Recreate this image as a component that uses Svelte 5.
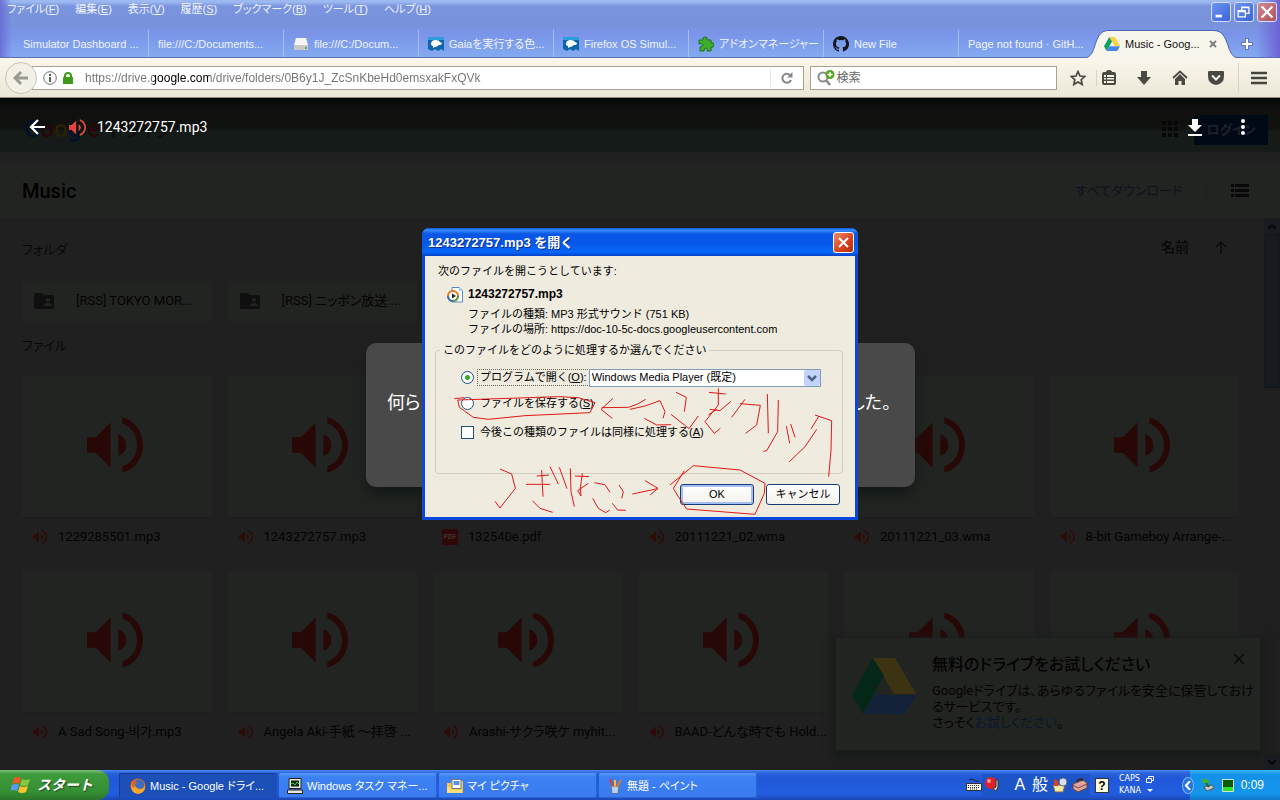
<script>
  const menus = [
    ['ファイル', 'F'], ['編集', 'E'], ['表示', 'V'], ['履歴', 'S'],
    ['ブックマーク', 'B'], ['ツール', 'T'], ['ヘルプ', 'H']
  ];
  const tabs = [
    { title: 'Simulator Dashboard ...' },
    { title: 'file:///C:/Documents...' },
    { title: 'file:///C:/Docum...', icon: 'disk' },
    { title: 'Gaiaを実行する色...', icon: 'moz' },
    { title: 'Firefox OS Simul...', icon: 'moz' },
    { title: 'アドオンマネージャー', icon: 'addon' },
    { title: 'New File', icon: 'github' },
    { title: 'Page not found · GitH...' }
  ];
  const folders = ['[RSS] TOKYO MOR...', '[RSS] ニッポン放送 ...'];
  const files = [
    '1229285501.mp3', '1243272757.mp3', '132540e.pdf', '20111221_02.wma', '20111221_03.wma', '8-bit Gameboy Arrange-...',
    'A Sad Song-비가.mp3', 'Angela Aki-手紙 ～拝啓 ...', 'Arashi-サクラ咲ケ myhit...', 'BAAD-どんな時でも Hold...', '', ''
  ];
  const tasks = [
    { title: 'Music - Google ドライ...', icon: 'firefox', active: true },
    { title: 'Windows タスク マネー...', icon: 'monitor' },
    { title: 'マイ ピクチャ', icon: 'pictures' },
    { title: '無題 - ペイント', icon: 'paint' }
  ];
  let url = $state('https://drive.google.com/drive/folders/0B6y1J_ZcSnKbeHd0emsxakFxQVk');
  let action = $state('open');
</script>

{#snippet speaker(size)}
  <svg width={size} height={size} viewBox="0 0 57 56" fill="currentColor" aria-hidden="true">
    <path d="M0 20H9L24 5V51L9 36H0zM32 17Q40 20 40 28T32 39zM36 0C49 3 57 15 57 28S49 53 36 56V50C45 47 51 38 51 28S45 9 36 6z" />
  </svg>
{/snippet}

{#snippet driveLogo(w, h)}
  <svg width={w} height={h} viewBox="0 0 64 56" aria-hidden="true">
    <path fill="#ffcf48" d="M21 0H43L64 36H42z" />
    <path fill="#0fa15f" d="M21 0L32 18L11 56L0 37z" />
    <path fill="#4a86e8" d="M22 37H64L53 56H11z" />
  </svg>
{/snippet}

<div class="shell">
  <header class="frame">
    <div class="menurow">
      <nav class="menus">
        {#each menus as [name, key]}
          <button>{name}(<u>{key}</u>)</button>
        {/each}
      </nav>
      <div class="winbtns">
        <button aria-label="最小化"><svg viewBox="0 0 20 20"><path fill="#fff" d="M4 13h7v3H4z" /></svg></button>
        <button aria-label="元に戻す"><svg viewBox="0 0 20 20" fill="none" stroke="#fff" stroke-width="1.400"><path d="M7.500 8V4.500h8v7H12M7 5h9" /><path d="M3.500 8.500h8v7h-8zM3 9.500h9" /></svg></button>
        <button class="x" aria-label="閉じる"><svg viewBox="0 0 20 20" stroke="#fff" stroke-width="2.400"><path d="M4 4l12 12M16 4L4 16" /></svg></button>
      </div>
    </div>
    <div class="tabs">
      {#each tabs as tab}
        <button class="tab">
          {#if tab.icon === 'disk'}
            <svg width="16" height="16" viewBox="0 0 16 16"><path fill="#f6f5f0" d="M3 2h10l2 7v5H1V9z" /><path fill="#c9c8c4" d="M1 9h14v4q0 1-1 1H2q-1 0-1-1z" /><path fill="#5a8" d="M12 11h2v2h-2z" /></svg>
          {:else if tab.icon === 'moz'}
            <svg width="16" height="16" viewBox="0 0 16 16"><path fill="#0b66ac" d="M0 1h16v14l-3-2-3 2-3-2-3 2-4-2z" /><path fill="#2da0dc" d="M0 1h16v3H0z" /><path fill="#fff" d="M3 8q0-4 5-4 3 0 4 2l2 1q0 2-3 2-2 2-4 2l-2 1v-2q-2 0-2-2z" /></svg>
          {:else if tab.icon === 'addon'}
            <svg width="16" height="16" viewBox="0 0 16 16"><path fill="#3fae2c" stroke="#1d7416" d="M5 4Q4 1 7 1t2 3h4v3q3-1 3 2t-3 2v4H9q1-3-1-3t-2 3H2v-4q3 0 3-2T1 8V4z" /></svg>
          {:else if tab.icon === 'github'}
            <svg width="16" height="16" viewBox="0 0 16 16"><path fill="#15181c" d="M8 0C3.580 0 0 3.580 0 8c0 3.540 2.290 6.530 5.470 7.590.4.070.55-.17.55-.38v-1.490c-2.230.48-2.700-.94-2.700-.94-.36-.92-.89-1.170-.89-1.170-.73-.5.050-.49.050-.49.81.060 1.230.83 1.230.83.71 1.230 1.870.87 2.330.67.070-.52.280-.87.500-1.070-1.780-.2-3.640-.89-3.640-3.950 0-.87.310-1.590.82-2.150-.08-.2-.36-1.020.08-2.120 0 0 .67-.21 2.200.82a7.600 7.600 0 0 1 4 0c1.530-1.040 2.200-.82 2.200-.82.44 1.100.16 1.920.08 2.120.51.560.82 1.270.82 2.150 0 3.070-1.870 3.750-3.650 3.950.29.250.54.730.54 1.480v2.180c0 .21.150.46.550.38A8 8 0 0 0 8 0" /></svg>
          {/if}
          <span>{tab.title}</span>
        </button>
      {/each}
      <div class="tab active">
        <svg class="shape" viewBox="0 0 155 28" preserveAspectRatio="none"><path fill="#f8f5ec" stroke="#4b62ae" d="M0 28C14 28 8 1 24 .5H130C147 1 141 28 155 28" /></svg>
        {@render driveLogo(16, 14)}
        <span>Music - Goog...</span>
        <button class="tabx" aria-label="タブを閉じる"><svg width="8" height="8" viewBox="0 0 8 8" stroke="#7d7d7d" stroke-width="2"><path d="M1 1l6 6M7 1L1 7" /></svg></button>
      </div>
      <button class="newtab" aria-label="新しいタブ"><svg width="12" height="12" viewBox="0 0 12 12"><path fill="#fff" stroke="#4a5ca0" stroke-width=".8" d="M4.500 .5h3v4h4v3h-4v4h-3v-4h-4v-3h4z" /></svg></button>
    </div>
  </header>

  <div class="toolbar">
    <button class="back" aria-label="戻る"><svg width="16" height="16" viewBox="0 0 16 16" fill="none" stroke="#9c998f" stroke-width="3"><path d="M15 8H3M8 2L2 8l6 6" /></svg></button>
    <div class="urlbar">
      <svg width="14" height="14" viewBox="0 0 14 14"><circle cx="7" cy="7" r="6.300" fill="none" stroke="#6b6b6b" /><path fill="#5c5c5c" d="M6 6h2v5H6zM6 3h2v2H6z" /></svg>
      <svg width="10" height="12" viewBox="0 0 10 12"><path fill="none" stroke="#3f9a1c" stroke-width="2" d="M2 6V4q0-3 3-3t3 3v2" /><path fill="#3f9a1c" d="M0 5h10v7H0z" /></svg>
      <input class="url" aria-label="アドレス" bind:value={url} />
      <button class="reload" aria-label="再読み込み"><svg width="12" height="12" viewBox="0 0 12 12"><path fill="none" stroke="#84888e" stroke-width="2" d="M9.500 3.500A4.500 4.500 0 1 0 10 8" /><path fill="#84888e" d="M11.500 0v5.500H6z" /></svg></button>
    </div>
    <div class="search">
      <svg width="18" height="16" viewBox="0 0 18 16"><circle cx="6" cy="7" r="4.500" fill="none" stroke="#8c8c8c" stroke-width="2" /><path stroke="#8c8c8c" stroke-width="2.500" d="M9 10l4 5" /><circle cx="13" cy="4.500" r="4.500" fill="#57a51d" /><path stroke="#fff" stroke-width="1.300" d="M10.500 4.500h5M13 2v5" /></svg>
      <input aria-label="検索" placeholder="検索" />
    </div>
    <div class="tools">
      <button aria-label="ブックマーク"><svg width="16" height="16" viewBox="0 0 16 16" fill="none" stroke="#4b4a42" stroke-width="1.700"><path d="M8 1.500l2 4.500 4.800.5-3.600 3.200 1 4.800L8 12l-4.200 2.500 1-4.800L1.200 6.500 6 6z" /></svg></button>
      <button class="sep" aria-label="一覧"><svg width="16" height="16" viewBox="0 0 16 16"><path fill="#4b4a42" d="M5 2q0-2 3-2t3 2h2q2 0 2 2v9q0 2-2 2H3q-2 0-2-2V4q0-2 2-2z" /><path fill="#f3f0e5" d="M3 5h2v2H3zM6 5h7v2H6zM3 8h2v1.500H3zM6 8h7v1.500H6zM3 11h2v2H3zM6 11h7v2H6z" /></svg></button>
      <button aria-label="ダウンロード"><svg width="16" height="16" viewBox="0 0 16 16"><path fill="#4b4a42" d="M5 1h6v6h4l-7 8-7-8h4z" /></svg></button>
      <button aria-label="ホーム"><svg width="16" height="16" viewBox="0 0 16 16"><path fill="none" stroke="#4b4a42" stroke-width="1.800" d="M1 8l7-6.500L15 8" /><path fill="#4b4a42" d="M3 9l5-5 5 5v6H9.500v-4h-3v4H3z" /></svg></button>
      <button aria-label="Pocket"><svg width="16" height="16" viewBox="0 0 16 16"><path fill="#4b4a42" d="M1 1h14q1 0 1 1v4q0 8-8 9Q0 14 0 6V2q0-1 1-1z" /><path fill="none" stroke="#f3f0e5" stroke-width="2" d="M4 5.500l4 4 4-4" /></svg></button>
      <button class="sep burger" aria-label="メニュー"><svg width="16" height="14" viewBox="0 0 16 14"><path stroke="#45443d" stroke-width="2.600" d="M0 2h16M0 7h16M0 12h16" /></svg></button>
    </div>
  </div>

  <main class="page">
    <div class="gbar">
      <div class="glogo"><b class="g1">G</b><b class="g2">o</b><b class="g3">o</b><b class="g1">g</b><b class="g4">l</b><b class="g2">e</b><span>ドライブ</span></div>
      <svg width="17" height="17" viewBox="0 0 17 17" fill="#060706"><path d="M0 0h4v4H0zM6 0h4v4H6zM12 0h4v4h-4zM0 6h4v4H0zM6 6h4v4H6zM12 6h4v4h-4zM0 12h4v4H0zM6 12h4v4H6zM12 12h4v4h-4z" /></svg>
      <button class="login">ログイン</button>
    </div>
    <div class="titlebar">
      <h1>Music</h1>
      <button class="dlall">すべてダウンロード</button>
      <svg width="18" height="14" viewBox="0 0 18 14"><path fill="#080908" d="M0 0h3v3H0zM4 0h14v3H4zM0 5h3v3H0zM4 5h14v3H4zM0 10h3v3H0zM4 10h14v3H4z" /></svg>
    </div>
    <div class="body">
      <div class="list">
        <div class="sechead"><span>フォルダ</span><span class="sort">名前</span><svg width="12" height="14" viewBox="0 0 12 14" fill="none" stroke="#0b0b0b" stroke-width="1.500"><path d="M6 14V2M1 7l5-5 5 5" /></svg></div>
        <div class="grid">
          {#each folders as f}
            <div class="folder"><svg width="20" height="16" viewBox="0 0 20 16"><path fill="#0e0f0e" d="M2 0h6l2 2h8q2 0 2 2v10q0 2-2 2H2q-2 0-2-2V2q0-2 2-2z" /><circle cx="14" cy="7" r="2" fill="#222421" /><path fill="#222421" d="M10 13q0-3 4-3t4 3z" /></svg><span>{f}</span></div>
          {/each}
        </div>
        <div class="sechead files">ファイル</div>
        <div class="grid">
          {#each files as f}
            <div class="file">
              <div class="thumb">{@render speaker(56)}</div>
              <div class="name">
                {#if f.endsWith('.pdf')}
                  <span class="pdf">PDF</span>
                {:else}
                  {@render speaker(14)}
                {/if}
                <span>{f}</span>
              </div>
            </div>
          {/each}
        </div>
      </div>
      <div class="scroll"><i class="up"><svg width="8" height="5" viewBox="0 0 8 5" fill="none" stroke="#05080c" stroke-width="2"><path d="M0 5l4-4 4 4" /></svg></i><i class="bar"></i><i class="down"><svg width="8" height="5" viewBox="0 0 8 5" fill="none" stroke="#05080c" stroke-width="2"><path d="M0 0l4 4 4-4" /></svg></i></div>
    </div>

    <aside class="promo">
      <div class="plogo">{@render driveLogo(64, 56)}</div>
      <div>
        <h2>無料のドライブをお試しください</h2>
        <p>Googleドライブは、あらゆるファイルを安全に保管しておけるサービスです。<br />さっそく<a href="#try">お試しください</a>。</p>
      </div>
      <button aria-label="閉じる"><svg width="10" height="10" viewBox="0 0 10 10" stroke="#090a09" stroke-width="1.500"><path d="M0 0l10 10M10 0L0 10" /></svg></button>
    </aside>

    <div class="viewer">
      <button aria-label="戻る"><svg width="16" height="16" viewBox="0 0 16 16" fill="none" stroke="#fff" stroke-width="2.200"><path d="M16 8H2M9 1L2 8l7 7" /></svg></button>
      <span class="vicon">{@render speaker(17)}</span>
      <span class="vname">1243272757.mp3</span>
      <button aria-label="ダウンロード"><svg width="14" height="17" viewBox="0 0 14 17" fill="#fff"><path d="M4 0h6v6h4l-7 7-7-7h4zM0 15h14v2H0z" /></svg></button>
      <button class="more" aria-label="その他"><svg width="4" height="16" viewBox="0 0 4 16" fill="#fff"><circle cx="2" cy="2" r="2" /><circle cx="2" cy="8" r="2" /><circle cx="2" cy="14" r="2" /></svg></button>
    </div>

    <div class="message"><span>何ら</span><span>した。</span></div>

    <section class="dialog">
      <div class="dtitle"><strong>1243272757.mp3 を開く</strong><button aria-label="閉じる"><svg width="19" height="19" viewBox="0 0 19 19" stroke="#fff" stroke-width="2"><path d="M5 5l9 9M14 5l-9 9" /></svg></button></div>
      <div class="dbody">
        <p>次のファイルを開こうとしています:</p>
        <div class="dfile">
          <svg width="16" height="16" viewBox="0 0 16 16"><path fill="#fff" stroke="#5a86c4" d="M5 .5h7l3.500 3V15H5z" /><path fill="#a9c9ef" d="M12 0v4h4z" /><circle cx="6" cy="9" r="5" fill="#fff" stroke="#e27a1e" stroke-width="2" /><path fill="none" stroke="#3472c9" stroke-width="2" d="M1 9a5 5 0 0 0 5 5" /><path fill="none" stroke="#4ba43a" stroke-width="2" d="M6 14a5 5 0 0 0 5-5" /><path fill="#222" d="M5 6.500L9 9l-4 2.500z" /></svg>
          <div>
            <strong>1243272757.mp3</strong>
            <div class="meta">ファイルの種類: MP3 形式サウンド (751 KB)</div>
            <div class="meta">ファイルの場所: https://doc-10-5c-docs.googleusercontent.com</div>
          </div>
        </div>
        <fieldset>
          <legend>このファイルをどのように処理するか選んでください</legend>
          <div class="opt">
            <input type="radio" id="open" value="open" bind:group={action} />
            <label class="focus" for="open">プログラムで開く(<u>O</u>):</label>
            <select aria-label="プログラム"><option>Windows Media Player (既定)</option></select>
          </div>
          <div class="opt">
            <input type="radio" id="save" value="save" bind:group={action} />
            <label for="save">ファイルを保存する(<u>S</u>)</label>
          </div>
          <div class="opt last">
            <input type="checkbox" id="always" />
            <label for="always">今後この種類のファイルは同様に処理する(<u>A</u>)</label>
          </div>
        </fieldset>
        <div class="dbtns"><button class="ok">OK</button><button>キャンセル</button></div>
      </div>
      <svg class="ink" viewBox="21 -396 1308 876" fill="none" stroke="#e01818" stroke-width="3">
        <path d="M118 116L148 113M128 120L160 119 430 110 490 113 540 128 525 158 330 167 220 178 175 172 133 142 128 120" />
        <path d="M594 115L558 148 592 175M560 143L640 142 668 132 692 118M645 148L690 138 735 122 750 155 744 175M688 175L725 195 768 194" />
        <path d="M783 97L814 112 808 155M768 163L822 206 850 168M882 97L932 102M910 85V135L870 185 898 220 916 205M884 148L915 152 948 124M905 148L880 165" />
        <path d="M990 118L950 172M975 131L1036 136 1025 195 992 220M1057 102L1060 220M1090 120L1088 215 1055 272 1045 274" />
        <path d="M1114 198L1124 250M1127 192L1140 232M1205 208L1170 260 1122 306M1212 168L1188 207M1200 165L1250 182 1248 270 1241 350" />
        <path d="M255 327L290 342 301 385 255 444 240 424M365 348L402 345M333 373L405 373M380 330L384 410M352 422L375 445 413 457M405 320L430 372M433 322L456 386" />
        <path d="M466 325L468 395 478 440M480 348L522 350M502 340L496 385 498 408 488 392 520 370M538 368L570 374 585 397M533 415L550 445 572 458 584 450M612 375L625 395 620 415M592 430L608 450 632 451" />
        <path d="M652 402L728 386M690 362L729 385 705 405M765 375L835 317 975 330 1050 370 1048 400 1020 463 815 447 790 410 775 385 808 332" />
      </svg>
    </section>
  </main>

  <footer class="taskbar">
    <button class="start">
      <svg width="20" height="18" viewBox="0 0 20 18"><path fill="#f0592b" d="M3 2q3-2 7 0L8 8Q5 6 1 8z" /><path fill="#8ac53f" d="M11 3q3 2 8 0l-2 6q-4 2-8 0z" /><path fill="#5a9cf5" d="M1 9q4-2 7 0l-2 6q-3-2-7 0z" /><path fill="#fbc42d" d="M9 10q3 2 8 0l-2 6q-4 2-8 0z" /></svg>
      <span>スタート</span>
    </button>
    <div class="tasks">
      {#each tasks as t}
        <button class="task" class:on={t.active}>
          {#if t.icon === 'firefox'}
            <svg width="16" height="16" viewBox="0 0 16 16"><circle cx="8" cy="8" r="7.500" fill="#e8641b" /><circle cx="9" cy="6.500" r="5" fill="#3c6fc0" /><path fill="#f9a72b" d="M1 4q3 0 4 3 1 4 5 4 4 0 5-4 1 8-7 9Q0 15 1 4z" /><path fill="#e8641b" d="M1 3l2 1q3-1 4 1-3 1-2 4-4 2-4-6z" /></svg>
          {:else if t.icon === 'monitor'}
            <svg width="16" height="16" viewBox="0 0 16 16"><path fill="#e8e6d8" stroke="#222" d="M2 .5h12v10H2zM.5 12h15v3.500H.5z" /><path fill="#062406" d="M4 2.500h8v6H4z" /><path fill="none" stroke="#3fe03f" d="M4 6l2-1 2 2 2-3 2 2" /></svg>
          {:else if t.icon === 'pictures'}
            <svg width="16" height="16" viewBox="0 0 16 16"><path fill="#f1c94b" d="M0 5h4V3h12v12H0z" /><path fill="#fff" stroke="#777" d="M5 1.500h9v9H5z" /><path fill="#5a93d8" d="M6.500 3h6v4h-6z" /><path fill="#f9df7a" d="M0 9h3l1 3h11l-1 3H0z" /></svg>
          {:else}
            <svg width="16" height="16" viewBox="0 0 16 16"><path fill="#bccfe6" stroke="#5b7398" d="M4 8h8l-1 7.500H5z" /><path stroke="#e03a2a" stroke-width="2" d="M6 8L3 1" /><path stroke="#f2c22e" stroke-width="2" d="M8 8V2" /><path stroke="#e2762a" stroke-width="2" d="M10 9l4-7" /></svg>
          {/if}
          <span>{t.title}</span>
        </button>
      {/each}
    </div>
    <div class="lang">
      <svg width="16" height="16" viewBox="0 0 16 16"><path fill="none" stroke="#222" d="M3 3q3-2 5 0t5 1" /><path fill="#f4f2e4" stroke="#333" d="M.5 6.500h15v7H.5z" /><path stroke="#333" stroke-dasharray="1 1" d="M2 8.500h12M2 10.500h12M4 12h8" /></svg>
      <i class="cell"><svg width="16" height="16" viewBox="0 0 16 16"><circle cx="7" cy="6" r="6" fill="#e2202a" /><circle cx="5" cy="4" r="2" fill="#ff9c9c" /><path fill="#ddd" stroke="#333" d="M12 3h2v7l-2 4-3-2 3-2z" /></svg></i>
      <span class="cell mode">A</span><span class="cell">般</span>
      <i class="cell"><svg width="16" height="16" viewBox="0 0 16 16"><path fill="#f4e9a4" stroke="#765" d="M1 8h12l-2 7H3z" /><path fill="#d8402c" d="M2 2l4 2v5H2z" /><circle cx="11" cy="5" r="4" fill="#d8e4ec" stroke="#667" /></svg></i>
      <i class="cell"><svg width="16" height="16" viewBox="0 0 16 16"><path fill="#d9a79f" stroke="#643" d="M1 7l10-4 4 3v5l-9 4-5-3z" /><path fill="none" stroke="#322" stroke-width="1.500" d="M5 5q0-3 5-3v2" /><path fill="none" stroke="#844" d="M1 8l5 3 9-4" /></svg></i>
      <i class="cell help">?</i>
      <span class="caps">CAPS<br />KANA</span>
      <svg width="8" height="18" viewBox="0 0 8 18"><path fill="none" stroke="#fff" d="M2.500 3V.5h5v4H6M.5 2.500h5v4h-5z" /><path fill="#fff" d="M1 13h6l-3 3z" /></svg>
    </div>
    <div class="tray">
      <button class="chev" aria-label="隠れているアイコンを表示"><svg width="6" height="9" viewBox="0 0 6 9" fill="none" stroke="#fff" stroke-width="2"><path d="M5 0L1 4.500 5 9" /></svg></button>
      <svg width="14" height="14" viewBox="0 0 14 14"><path fill="#3fae3a" d="M1 1h5l3 3-4 2-4-2z" /><path fill="#ccc" stroke="#555" d="M3 9l8-2 2 3-7 3z" /><path stroke="#1e6e1b" stroke-width="2" d="M5 5l3 4" /></svg>
      <svg width="12" height="13" viewBox="0 0 12 13"><path fill="#0a5c0a" stroke="#cfe8cf" d="M.5 .5h11v12H.5z" /><path fill="#2fe02f" d="M1 8h10v4H1z" /></svg>
      <time>0:09</time>
    </div>
  </footer>
</div>

<style>
  :global(body) { margin: 0; }
  .shell { height: 100vh; display: flex; flex-direction: column; overflow: hidden; font: 11px/16px "Liberation Sans", "Noto Sans CJK JP", sans-serif; font-feature-settings: "palt"; white-space: nowrap; }
  .shell *, .shell { box-sizing: border-box; }
  button { font: inherit; font-feature-settings: inherit; color: inherit; border: 0; background: none; padding: 0; margin: 0; }
  input, select { font: inherit; font-feature-settings: inherit; margin: 0; }
  svg { display: block; flex: none; }
  p, h1, h2 { margin: 0; font-weight: normal; }
  i { font-style: normal; }

  .frame { flex: none; height: 58px; display: flex; flex-direction: column; justify-content: space-between; color: #eef3ff; border-bottom: 1px solid #5a6eb8; background: linear-gradient(90deg, #6c70d8 0, #7b9cec00 12px, #7b9cec00 calc(100% - 24px), #6d62d4), linear-gradient(#9db9f2 0, #9db9f2 2px, #7a94dd 6px, #7893dc 26px, #7b96ea 36px, #83a9ef 56px); }
  .menurow { display: flex; justify-content: space-between; align-items: flex-start; padding: 1px 3px 0 7px; }
  .menus { display: flex; gap: 16px; }
  .winbtns { display: flex; gap: 3px; padding-top: 1px; }
  .winbtns button { width: 20px; height: 20px; border: 1px solid #d2defb; border-radius: 3px; background: linear-gradient(135deg, #6f95f1, #3a63d8); }
  .winbtns svg { width: 18px; height: 18px; }
  .winbtns .x { background: linear-gradient(135deg, #cf8a90, #ae5260); }
  .tabs { display: flex; height: 27px; padding-left: 14px; }
  .tab { flex: 0 1 135px; min-width: 0; display: flex; align-items: center; gap: 5px; padding: 0 9px; position: relative; overflow: hidden; border-right: 1px solid #a5bcf3; }
  .tab:nth-child(8) { border: 0; }
  .active { overflow: visible; border: 0; color: #111; padding: 0 10px; }
  .active > * { position: relative; }
  .active .shape { position: absolute; left: -10px; top: 0; width: calc(100% + 20px); height: 28px; }
  .tabx { margin-left: auto; padding: 4px; }
  .newtab { padding: 0 12px; }

  .toolbar { flex: none; height: 40px; display: flex; align-items: center; padding: 0 2px 0 5px; background: linear-gradient(#faf6ec, #ebe7d7); border-bottom: 1px solid #8f8c78; }
  .back { width: 32px; height: 32px; border-radius: 50%; border: 1px solid #c9c5b8; background: #f3f0e6; display: grid; place-items: center; z-index: 1; }
  .urlbar { flex: 778 1 0; min-width: 0; height: 24px; margin-left: -5px; background: #fff; border: 1px solid #a8a390; display: flex; align-items: center; gap: 6px; padding-left: 10px; }
  .url { flex: 1; min-width: 0; border: 0; outline: 0; margin-left: 6px; padding: 0; height: 18px; font-size: 12px; color: transparent; background: linear-gradient(90deg, #737373 68px, #000 68px, #000 125px, #737373 125px); -webkit-background-clip: text; background-clip: text; }
  .reload { width: 33px; height: 18px; display: grid; place-items: center; border-left: 1px solid #e5e5e5; }
  .search { flex: 244 1 0; min-width: 0; height: 24px; margin-left: 6px; background: #fff; border: 1px solid #a8a390; display: flex; align-items: center; padding-left: 6px; gap: 1px; }
  .search input { flex: 1; min-width: 0; border: 0; padding: 0; outline: 0; font-size: 12px; }
  .search input::placeholder { color: #666; }
  .tools { display: flex; align-items: center; padding-left: 3px; }
  .tools button { width: 36px; height: 30px; display: grid; place-items: center; }
  .tools .sep { border-left: 1px solid #d8d4c6; }
  .tools button:nth-child(2) { height: 16px; width: 30px; padding-right: 6px; }
  .tools .burger { width: 40px; margin-left: 4px; }

  .page { flex: 1; min-height: 0; position: relative; overflow: hidden; display: flex; flex-direction: column; background: #202020; color: #020302; font-family: Roboto, "Noto Sans CJK JP", "Noto Sans CJK KR", sans-serif; font-size: 13px; border-top: 1px solid #000; }
  .gbar { flex: none; height: 53px; display: flex; align-items: center; padding: 8px 12px 0 24px; background: linear-gradient(#060a07 0, #110f0f 10px, #101310 30px, #151b19 32px, #161b1a); }
  .glogo { display: flex; align-items: baseline; flex: 1; font-size: 24px; line-height: 28px; }
  .glogo b { font-weight: 500; }
  .g1 { color: #04102a; } .g2 { color: #260706; } .g3 { color: #2a2004; } .g4 { color: #04200d; }
  .glogo span { font-size: 18px; padding-left: 9px; color: #0a0d0c; }
  .login { width: 74px; height: 30px; margin-left: 15px; background: #000a16; color: #1b222b; font-weight: bold; }
  .titlebar { flex: none; height: 66px; padding: 0 31px 0 22px; display: flex; align-items: center; background: #222421; border-top: 11px solid #202020; }
  .titlebar h1 { flex: 1; font: 500 20px/24px Roboto, sans-serif; color: #000; }
  .dlall { color: #0a1220; height: 22px; padding-right: 24px; border-right: 1px solid #1e1f1d; margin-right: 24px; }
  .body { flex: 1; min-height: 0; display: flex; }
  .list { flex: 1; min-width: 0; padding: 0 25px 0 22px; }
  .sechead { display: flex; align-items: center; height: 63px; color: #080808; }
  .sechead svg { margin: 0 12px 6px 26px; }
  .sort { margin-left: auto; font-size: 14px; font-weight: 500; padding-bottom: 6px; }
  .files { height: 55px; padding-bottom: 6px; }
  .grid { display: grid; grid-template-columns: repeat(6, minmax(0, 1fr)); gap: 16px; }
  .folder { height: 40px; background: #222421; display: flex; align-items: center; gap: 22px; padding-left: 12px; overflow: hidden; }
  .thumb { height: 142px; display: grid; place-items: center; padding: 0 4px 4px 0; background: #222421; border-bottom: 1px solid #1c1d1c; color: #280707; }
  .name { height: 37px; display: flex; align-items: center; gap: 11px; padding-left: 11px; overflow: hidden; }
  .name svg { color: #2e0a09; }
  .pdf { width: 16px; height: 16px; flex: none; margin-left: -2px; margin-right: -1px; background: #2c0808; color: #453332; font: bold 7px/16px Roboto, sans-serif; text-align: center; }
  .scroll { width: 16px; display: flex; flex-direction: column; background: #1e1f1e; }
  .scroll i { display: grid; place-items: center; height: 16px; background: #181c20; }
  .scroll .bar { height: 154px; background: #171b1f; border: 1px solid #13171a; }
  .scroll .down { margin-top: auto; }

  .promo { position: absolute; right: 20px; bottom: 20px; width: 424px; height: 112px; padding: 17px 5px 0 16px; display: flex; gap: 16px; background: #222421; box-shadow: 0 4px 8px 4px #181c19; }
  .promo > div { flex: 1; white-space: normal; min-width: 0; }
  .promo .plogo { flex: none; width: 64px; filter: brightness(.24); padding-top: 3px; }
  .promo h2 { font-size: 16px; line-height: 20px; font-weight: 500; padding-bottom: 8px; white-space: nowrap; }
  .promo a { color: #07182c; text-decoration: none; }
  .promo button { position: absolute; right: 16px; top: 16px; }

  .viewer { position: absolute; left: 0; right: 0; top: 0; height: 56px; padding: 0 35px 0 29px; display: flex; align-items: center; color: #fff; }
  .vicon { color: #e2453a; margin-left: 24px; }
  .vname { flex: 1; font-size: 14px; padding-left: 11px; }
  .more { margin-left: 39px; }

  .message { position: absolute; left: calc(50% - 274px); top: 244px; width: 549px; height: 144px; padding: 0 24px 24px 21px; display: flex; align-items: center; justify-content: space-between; color: #fff; font-size: 18px; background: #494949; border-radius: 10px; box-shadow: 0 8px 12px #141a18; }

  .dialog { position: absolute; left: calc(50% - 218px); top: 129px; width: 436px; border: 3px solid #0a47dc; border-top: 0; border-radius: 7px 7px 0 0; background: #0a47dc; color: #000; font: 11px/15px "Liberation Sans", "Noto Sans CJK JP", sans-serif; }
  .dtitle { height: 28px; margin: 0 -3px; padding: 0 4px 0 6px; border-radius: 7px 7px 0 0; display: flex; align-items: center; justify-content: space-between; color: #fff; font-size: 13px; text-shadow: 1px 1px #0b2f8c; background: linear-gradient(#0b50d8, #3a8cf8 2px, #0a56e6 6px, #0458e8 16px, #0667fb 24px, #0340c8); }
  .dtitle button { border: 1px solid #fff; border-radius: 3px; background: linear-gradient(135deg, #ee8b6a, #d6401c 60%, #b92c0c); }
  .dbody { background: #efebde; padding: 8px 12px 12px 10px; }
  .dbody p { padding-left: 3px; }
  .dfile { display: flex; gap: 5px; padding: 8px 0 0 12px; }
  .dfile strong { display: block; padding-bottom: 5px; font-size: 12px; }
  fieldset { margin: 6px 0 0; border: 1px solid #d0cebf; border-radius: 4px; padding: 10px 21px 0 25px; height: 131px; min-width: 0; }
  legend { padding: 0 3px; margin-left: -21px; }
  .opt { display: flex; align-items: center; height: 19px; margin-bottom: 7px; }
  .opt.last { margin-top: 10px; }
  .opt input { appearance: none; width: 13px; height: 13px; border: 1px solid #1c5180; background: #fff; margin-right: 4px; flex: none; }
  .opt input[type="radio"] { border-radius: 50%; }
  .opt input:checked { background: radial-gradient(circle, #2fae28 0 2px, #fff 3px); }
  .opt label { padding: 0 2px; }
  .opt .focus { outline: 1px dotted #6a6756; }
  .opt select { margin-left: auto; width: 239px; height: 18px; border: 1px solid #7f9db9; border-radius: 0; padding: 0 2px; color: #000; appearance: none; background: url("data:image/svg+xml,%3Csvg xmlns='http://www.w3.org/2000/svg' width='16' height='16'%3E%3Crect width='16' height='16' rx='2' fill='%23c2d3fc'/%3E%3Cpath d='M4 6l4 4 4-4' fill='none' stroke='%234d6185' stroke-width='2.500'/%3E%3C/svg%3E") right center no-repeat #fff; }
  .dbtns { display: flex; justify-content: flex-end; gap: 12px; padding: 10px 3px 0 0; }
  .dbtns button { width: 74px; height: 21px; border: 1px solid #163c74; border-radius: 3px; background: linear-gradient(#fff, #f3f2ea); }
  .dbtns .ok { box-shadow: inset 0 0 0 2px #a4c0f0; }
  .ink { position: absolute; left: -3px; top: 0; width: 436px; height: 292px; pointer-events: none; }

  .taskbar { flex: none; height: 30px; display: flex; color: #fff; background: linear-gradient(#4a8bf5 0, #2b64dc 3px, #2158d8 8px, #225de0 24px, #1b46b4); }
  .start { width: 109px; display: flex; align-items: center; gap: 6px; padding-left: 11px; border-radius: 0 12px 12px 0; background: linear-gradient(#7cc07a 0, #3f9a3c 4px, #358f33 22px, #2a742a); }
  .start span { font: italic bold 14px/20px "Liberation Sans", "Noto Sans CJK JP", sans-serif; text-shadow: 1px 1px 1px #1a4a1a; }
  .tasks { flex: 1; min-width: 0; display: flex; gap: 2px; padding: 3px 0 2px 10px; }
  .task { flex: 0 1 158px; min-width: 0; overflow: hidden; display: flex; align-items: center; gap: 4px; padding-left: 8px; border-radius: 2px; background: linear-gradient(#5a97f8, #3c81f3 4px, #3a7bef); box-shadow: inset -1px -1px #2a62cf; }
  .task.on { padding-left: 11px; background: #1c50b8; box-shadow: inset 1px 1px #153d95; }
  .lang { display: flex; align-items: center; padding-right: 36px; }
  .cell { width: 20px; height: 22px; display: grid; place-items: center; font-size: 16px; background: #1d55c8; }
  .lang .mode { width: 28px; padding-left: 8px; }
  .lang .help { width: 14px; height: 15px; margin: 0 10px 0 5px; background: #fffde0; color: #000; font: bold 12px/14px "Liberation Sans", sans-serif; border: 1px solid #333; }
  .caps { font: 8px/12px "DejaVu Sans", sans-serif; margin-right: 5px; }
  .tray { width: 90px; display: flex; align-items: center; gap: 7px; font-size: 12px; background: linear-gradient(#3bb5f5, #1391e8 5px, #1396ea 24px, #0f74c8); }
  .chev { width: 17px; height: 17px; margin-left: -8px; border-radius: 50%; border: 1px solid #7db8f5; background: #2a73dc; display: grid; place-items: center; }
  .tray time { margin-left: auto; padding-right: 16px; }
</style>
